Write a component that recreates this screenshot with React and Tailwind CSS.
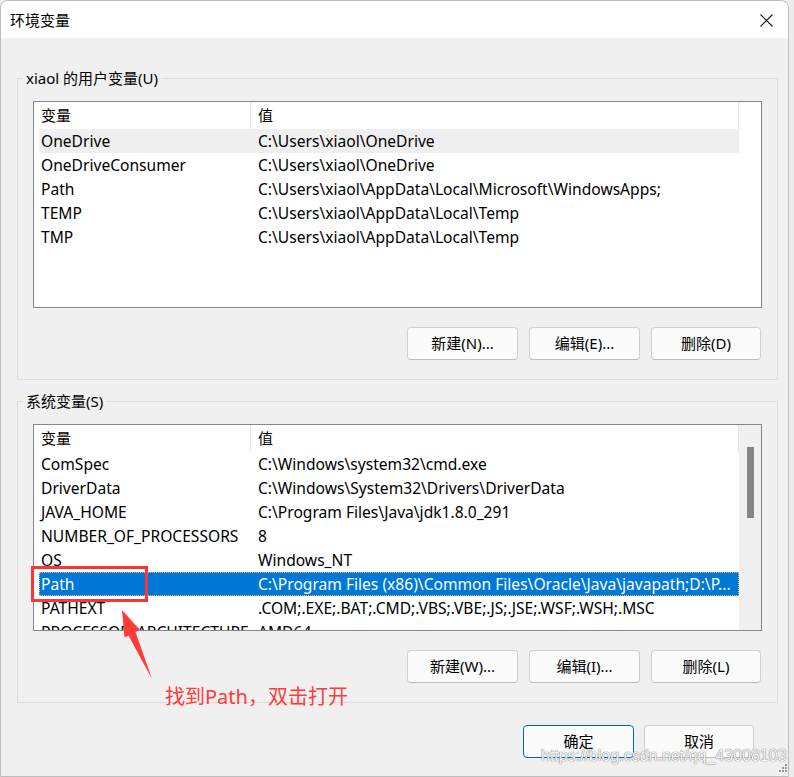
import React from "react";

const FONT = { fontFamily: '"Noto Sans", "Noto Sans CJK SC", sans-serif' };

const userVars = [
  ["OneDrive", "C:\\Users\\xiaol\\OneDrive", "hover"],
  ["OneDriveConsumer", "C:\\Users\\xiaol\\OneDrive"],
  ["Path", "C:\\Users\\xiaol\\AppData\\Local\\Microsoft\\WindowsApps;"],
  ["TEMP", "C:\\Users\\xiaol\\AppData\\Local\\Temp"],
  ["TMP", "C:\\Users\\xiaol\\AppData\\Local\\Temp"],
];

const sysVars = [
  ["ComSpec", "C:\\Windows\\system32\\cmd.exe"],
  ["DriverData", "C:\\Windows\\System32\\Drivers\\DriverData"],
  ["JAVA_HOME", "C:\\Program Files\\Java\\jdk1.8.0_291"],
  ["NUMBER_OF_PROCESSORS", "8"],
  ["OS", "Windows_NT"],
  ["Path", "C:\\Program Files (x86)\\Common Files\\Oracle\\Java\\javapath;D:\\P...", "selected"],
  ["PATHEXT", ".COM;.EXE;.BAT;.CMD;.VBS;.VBE;.JS;.JSE;.WSF;.WSH;.MSC"],
  ["PROCESSOR_ARCHITECTURE", "AMD64"],
];

function Row({ name, value, state }) {
  const base = "ml-[5px] w-[700px] h-[24px] flex shrink-0 leading-[24px] text-[15.6px] whitespace-nowrap";
  if (state === "selected") {
    return (
      <div className={base + " bg-[#0078d7] text-white outline outline-1 outline-dotted outline-[#f3b27a] -outline-offset-1"}>
        <div className="w-[212px] pl-[2px] overflow-hidden">{name}</div>
        <div className="w-[488px] pl-[7px] overflow-hidden">{value}</div>
      </div>
    );
  }
  return (
    <div className={base + (state === "hover" ? " bg-[#efefef]" : "") + " text-black"}>
      <div className="w-[212px] pl-[2px] overflow-hidden">{name}</div>
      <div className="w-[488px] pl-[7px] overflow-hidden">{value}</div>
    </div>
  );
}

function ListView({ rows, scroll }) {
  return (
    <div className="w-[729px] h-[207px] border border-[#828790] bg-white flex overflow-hidden">
      <div className="w-[705px] flex flex-col overflow-hidden">
        <div className="flex h-[27px] shrink-0 text-[15px] leading-[27px] text-black">
          <div className="w-[217px] pl-[7px] border-r border-[#e5e5e5]">变量</div>
          <div className="w-[488px] pl-[7px] border-r border-[#e5e5e5]">值</div>
        </div>
        {rows.map((r) => (
          <Row key={r[0]} name={r[0]} value={r[1]} state={r[2]} />
        ))}
      </div>
      <div className={"w-[22px] flex justify-center pt-[22px] " + (scroll ? "bg-[#f0f0f0]" : "bg-white")}>
        {scroll && <div className="w-[7px] h-[71px] bg-[#858585]" />}
      </div>
    </div>
  );
}

function Btn({ children, primary, w = "w-[111px]" }) {
  return (
    <div
      className={
        w +
        " h-[33px] rounded-[4px] bg-[#fbfbfb] border flex items-center justify-center text-[15px] text-black " +
        (primary ? "border-[#0067c0]" : "border-[#d0d0d0] border-b-[#bdbdbd]")
      }
    >
      {children}
    </div>
  );
}

function Group({ legend, rows, scroll, buttons, className }) {
  return (
    <fieldset className={"w-[761px] border border-[#dcdcdc] px-[15px] pt-[13px] pb-[19px] " + className}>
      <legend className="-ml-[10px] px-[3px] text-[15px] leading-[20px] text-black">{legend}</legend>
      <ListView rows={rows} scroll={scroll} />
      <div className="flex justify-end gap-[11px] pr-[1px] mt-[19px]">
        <Btn>{buttons[0]}</Btn>
        <Btn>{buttons[1]}</Btn>
        <Btn w="w-[110px]">{buttons[2]}</Btn>
      </div>
    </fieldset>
  );
}

export default function App() {
  return (
    <div className="relative w-[794px] h-[777px] bg-[#ececec] overflow-hidden" style={FONT}>
      <div className="w-[789px] h-[777px] rounded-t-[8px] border border-[#bcbcbc] bg-[#f0f0f0] flex flex-col overflow-hidden">
        <div className="h-[37px] bg-white flex items-center justify-between pl-[9px] pr-[15px] shrink-0">
          <span className="text-[15px] text-black leading-[20px]">环境变量</span>
          <svg width="13" height="13" viewBox="0 0 13 13" className="mt-[1px]">
            <path d="M0.5 0.5 L12.5 12.5 M12.5 0.5 L0.5 12.5" stroke="#1a1a1a" strokeWidth="1.1" fill="none" />
          </svg>
        </div>
        <div className="pl-[16px] flex flex-col">
          <Group
            className="mt-[30px]"
            legend="xiaol 的用户变量(U)"
            rows={userVars}
            scroll={false}
            buttons={["新建(N)...", "编辑(E)...", "删除(D)"]}
          />
          <Group
            className="mt-[11px]"
            legend="系统变量(S)"
            rows={sysVars}
            scroll={true}
            buttons={["新建(W)...", "编辑(I)...", "删除(L)"]}
          />
          <div className="flex justify-end gap-[10px] pr-[34px] mt-[22px]">
            <Btn primary>确定</Btn>
            <Btn w="w-[110px]">取消</Btn>
          </div>
        </div>
      </div>

      {/* annotation overlays */}
      <div className="absolute left-[31px] top-[566px] w-[117px] h-[36px] border-[3px] border-[#ff3535]" />
      <svg className="absolute left-0 top-0" width="794" height="777" viewBox="0 0 794 777">
        <polygon points="122,610 140,630 135.5,632 152,679 128.5,635.5 124.5,637.5" fill="#ff3b3b" />
      </svg>
      <div className="absolute left-[165px] top-[684px] text-[20px] leading-[26px] text-[#ff3b3b] whitespace-nowrap">
        找到Path，双击打开
      </div>
      <div
        className="absolute left-[541px] top-[745px] text-[16px] leading-[22px] text-[#f6f6f6] whitespace-nowrap [text-shadow:0_0_1px_#7a7a7a,0_0_1px_#7a7a7a]"
        style={{ fontFamily: '"Liberation Sans", Arial, sans-serif' }}
      >
        https://blog.csdn.net/qq_43008103
      </div>
      <svg className="absolute left-[778px] top-[763px]" width="10" height="10" viewBox="0 0 10 10">
        <rect x="7" y="1" width="2" height="2" fill="#9a9a9a" />
        <rect x="4" y="4" width="2" height="2" fill="#9a9a9a" />
        <rect x="7" y="4" width="2" height="2" fill="#9a9a9a" />
        <rect x="1" y="7" width="2" height="2" fill="#9a9a9a" />
        <rect x="4" y="7" width="2" height="2" fill="#9a9a9a" />
        <rect x="7" y="7" width="2" height="2" fill="#9a9a9a" />
      </svg>
    </div>
  );
}
